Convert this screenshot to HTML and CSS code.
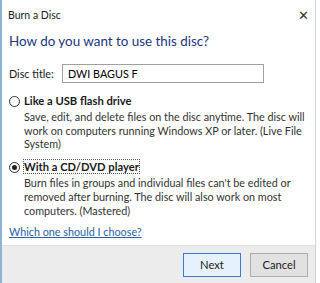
FILE: index.html
```html
<!DOCTYPE html>
<html lang="en">
<head>
    <meta charset="UTF-8">
    <title>Burn a Disc</title>
    <link rel="stylesheet" href="styles.css">
</head>
<body>

<div class="window">
    <div class="titlebar">
        <span class="title">Burn a Disc</span>
        <span class="close">&#x2715;</span>
    </div>

    <main class="content">
        <h1>How do you want to use this disc?</h1>

        <div class="field">
            <label for="disc-title">Disc title:</label>
            <input type="text" id="disc-title" value="DWI BAGUS F">
        </div>

        <div class="option">
            <span class="radio"></span>
            <div class="option-text">
                <strong>Like a USB flash drive</strong>
                <p>Save, edit, and delete files on the disc anytime. The disc will work on computers running Windows XP or later. (Live File System)</p>
            </div>
        </div>

        <div class="option">
            <span class="radio checked"></span>
            <div class="option-text">
                <strong class="focused">With a CD/DVD player</strong>
                <p>Burn files in groups and individual files can't be edited or removed after burning. The disc will also work on most computers. (Mastered)</p>
            </div>
        </div>

        <a href="#" class="help">Which one should I choose?</a>
    </main>

    <footer class="buttons">
        <button class="default">Next</button>
        <button>Cancel</button>
    </footer>
</div>

</body>
</html>
```

FILE: styles.css
```css
body {
    margin: 0;
    background: #ffffff;
    font-family: Lato, "Open Sans", sans-serif;
    font-size: 10.8px;
    color: #1a1a1a;
}

.window {
    height: 283px;
    width: 316px;
    box-sizing: border-box;
    border-left: 2px solid #8ab4d8;
    border-right: 1px solid #c8d8e8;
    display: flex;
    flex-direction: column;
}

.titlebar {
    display: flex;
    justify-content: space-between;
    align-items: center;
    height: 30px;
    padding: 0 6px 0 6px;
    font-size: 10.5px;
}

.close {
    font-size: 13px;
    color: #333;
}

.content {
    flex: 1;
    padding: 0 2px 0 7px;
}

h1 {
    margin: 3px 0 15px;
    font-size: 13.4px;
    font-weight: normal;
    color: #22367e;
}

.field {
    display: flex;
    align-items: center;
    margin-bottom: 10px;
}

.field label {
    width: 53px;
}

.field input {
    width: 202px;
    height: 19px;
    box-sizing: border-box;
    border: 1px solid #a0a0a0;
    padding: 0 5px;
    font-family: inherit;
    font-size: 10.8px;
}

.option {
    display: flex;
    gap: 4px;
    margin-bottom: 8px;
}

.radio {
    width: 9px;
    height: 9px;
    border: 1px solid #333;
    border-radius: 50%;
    margin-top: 3px;
    flex-shrink: 0;
    position: relative;
}

.radio.checked::after {
    content: "";
    position: absolute;
    left: 2px;
    top: 2px;
    width: 5px;
    height: 5px;
    border-radius: 50%;
    background: #222;
}

.option-text strong {
    font-weight: bold;
    font-size: 11.2px;
    line-height: 15px;
}

.focused {
    outline: 1px dotted #555;
}

.option-text p {
    margin: 2px 0 0;
    line-height: 13.7px;
    color: #333;
}

.help {
    display: inline-block;
    margin-top: 0;
    color: #2a62a8;
}

.buttons {
    height: 37px;
    background: #ececec;
    border-top: 1px solid #e0e0e0;
    display: flex;
    justify-content: flex-end;
    align-items: center;
    gap: 9px;
    padding-right: 7px;
}

.buttons button {
    width: 58px;
    height: 24px;
    background: #e1e1e1;
    border: 1px solid #adadad;
    font-family: inherit;
    font-size: 11.2px;
    color: #222;
}

.buttons .default {
    border: 1px solid #3a7bd5;
    background: #e5f1fb;
}
```
